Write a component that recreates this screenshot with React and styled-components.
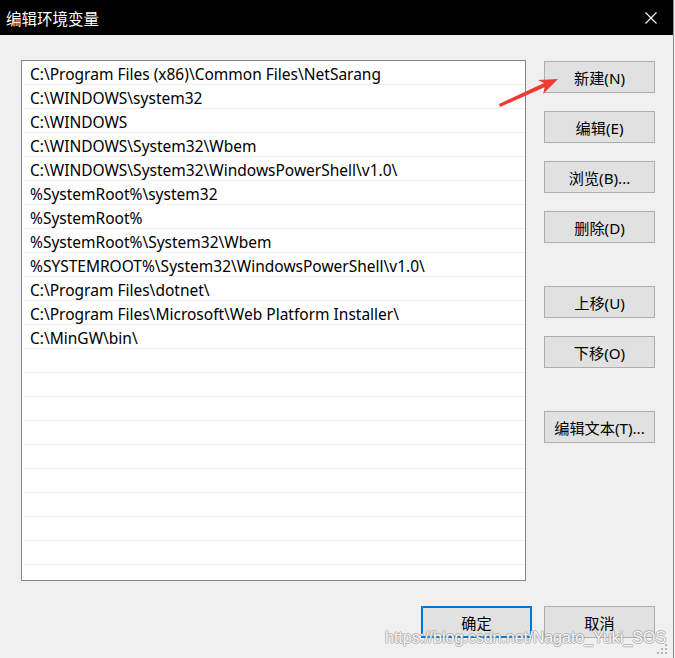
import styled, { createGlobalStyle } from "styled-components";

const GlobalStyle = createGlobalStyle`
  html, body {
    margin: 0;
    padding: 0;
    background: #f0f0f0;
  }
  body {
    font-family: "Noto Sans", "Noto Sans CJK SC", sans-serif;
  }
`;

const Window = styled.div`
  position: relative;
  width: 673px;
  height: 658px;
  background: #f0f0f0;
  border-right: 1px solid #8c8c8c;
  overflow: hidden;
`;

const TitleBar = styled.div`
  height: 35px;
  background: #000;
  color: #fff;
  display: flex;
  align-items: center;
  justify-content: space-between;
  padding: 0 16px 0 6px;
`;

const Title = styled.div`
  font-family: "Noto Sans CJK SC", sans-serif;
  font-size: 15.5px;
`;

const Body = styled.div`
  display: flex;
  flex-direction: column;
  padding: 25px 18px 0 21px;
`;

const Main = styled.div`
  display: flex;
  gap: 18px;
`;

const List = styled.div`
  width: 503px;
  height: 519px;
  border: 1px solid #828790;
  background: #fff;
  overflow: hidden;
`;

const Row = styled.div`
  height: 23px;
  border-bottom: 1px solid #f0f0f0;
  margin-left: 1px;
  padding-left: 7px;
  display: flex;
  align-items: center;
  font-family: "Noto Sans", "Noto Sans CJK SC", sans-serif;
  font-size: 15.5px;
  color: #000;
  white-space: nowrap;
  padding-top: 2px;
  box-sizing: border-box;
  height: 24px;
`;

const Side = styled.div`
  display: flex;
  flex-direction: column;
  padding-top: 1px;
`;

const Group = styled.div`
  display: flex;
  flex-direction: column;
  gap: 18px;
  margin-top: ${({ $gap }) => $gap || 0}px;
`;

const Button = styled.button`
  width: 111px;
  height: 32px;
  box-sizing: border-box;
  background: #e1e1e1;
  border: ${({ $default }) => ($default ? "2px solid #0078d7" : "1px solid #adadad")};
  font-family: "Noto Sans", "Noto Sans CJK SC", sans-serif;
  font-size: 15.2px;
  color: #000;
  padding: 0;
  display: flex;
  align-items: center;
  justify-content: center;
`;

const Footer = styled.div`
  display: flex;
  justify-content: flex-end;
  gap: 12px;
  margin-top: 25px;
`;

const Arrow = styled.svg`
  position: absolute;
  left: 496px;
  top: 74px;
`;

const Watermark = styled.div`
  position: absolute;
  left: 385px;
  top: 629px;
  font-family: "Liberation Sans", Arial, sans-serif;
  font-size: 16px;
  color: rgba(255, 255, 255, 0.92);
  text-shadow: 1px 0 0 rgba(150, 150, 150, 0.6), -1px 0 0 rgba(150, 150, 150, 0.6),
    0 1px 0 rgba(150, 150, 150, 0.6), 0 -1px 0 rgba(150, 150, 150, 0.6);
`;

const Grip = styled.svg`
  position: absolute;
  right: 4px;
  bottom: 2px;
`;

const paths = [
  "C:\\Program Files (x86)\\Common Files\\NetSarang",
  "C:\\WINDOWS\\system32",
  "C:\\WINDOWS",
  "C:\\WINDOWS\\System32\\Wbem",
  "C:\\WINDOWS\\System32\\WindowsPowerShell\\v1.0\\",
  "%SystemRoot%\\system32",
  "%SystemRoot%",
  "%SystemRoot%\\System32\\Wbem",
  "%SYSTEMROOT%\\System32\\WindowsPowerShell\\v1.0\\",
  "C:\\Program Files\\dotnet\\",
  "C:\\Program Files\\Microsoft\\Web Platform Installer\\",
  "C:\\MinGW\\bin\\",
];

const rows = Array.from({ length: 22 }, (_, i) => paths[i] || "");

export default function App() {
  return (
    <Window>
      <GlobalStyle />
      <TitleBar>
        <Title>编辑环境变量</Title>
        <svg width="12" height="12" viewBox="0 0 12 12">
          <path d="M0.5 0.5 L11.5 11.5 M11.5 0.5 L0.5 11.5" stroke="#fff" strokeWidth="1.1" />
        </svg>
      </TitleBar>
      <Body>
        <Main>
          <List>
            {rows.map((p, i) => (
              <Row key={i}>{p}</Row>
            ))}
          </List>
          <Side>
            <Group>
              <Button>新建(N)</Button>
              <Button>编辑(E)</Button>
              <Button>浏览(B)...</Button>
              <Button>删除(D)</Button>
            </Group>
            <Group $gap={43}>
              <Button>上移(U)</Button>
              <Button>下移(O)</Button>
            </Group>
            <Group $gap={43}>
              <Button>编辑文本(T)...</Button>
            </Group>
          </Side>
        </Main>
        <Footer>
          <Button $default>确定</Button>
          <Button>取消</Button>
        </Footer>
      </Body>
      <Arrow width="66" height="36" viewBox="0 0 66 36">
        <path d="M4 33 L49 13 L47 20 L62 5 L42 6 L48 9 L3 30 Z" fill="#f03a32" />
      </Arrow>
      <Watermark>https://blog.csdn.net/Nagato_Yuki_SOS</Watermark>
      <Grip width="12" height="12" viewBox="0 0 12 12">
        <rect x="8" y="0" width="2" height="2" fill="#b4b4b4" />
        <rect x="4" y="4" width="2" height="2" fill="#b4b4b4" />
        <rect x="8" y="4" width="2" height="2" fill="#b4b4b4" />
        <rect x="0" y="8" width="2" height="2" fill="#b4b4b4" />
        <rect x="4" y="8" width="2" height="2" fill="#b4b4b4" />
        <rect x="8" y="8" width="2" height="2" fill="#b4b4b4" />
      </Grip>
    </Window>
  );
}
